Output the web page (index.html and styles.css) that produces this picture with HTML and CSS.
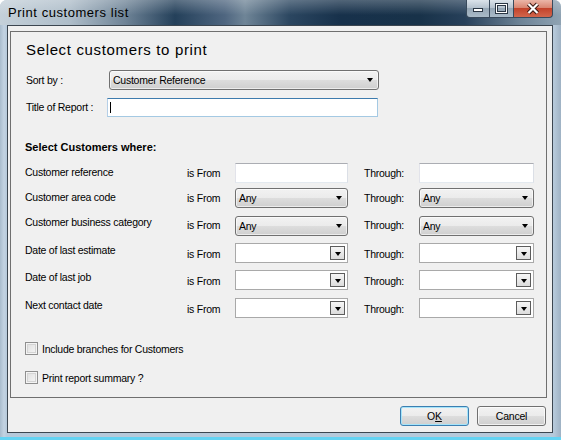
FILE: index.html
```html
<!DOCTYPE html>
<html lang="en">
<head>
  <meta charset="UTF-8">
  <title>Print customers list</title>
  <link rel="stylesheet" href="styles.css">
</head>
<body>
  <div class="window">
    <!-- Aero title bar -->
    <div class="titlebar">
      <span class="title">Print customers list</span>
      <div class="caption">
        <span class="cap cap-min">
          <svg width="22" height="17" viewBox="0 0 22 17"><rect x="6.5" y="8.5" width="9" height="3" fill="#fff" stroke="#2a3644"/></svg>
        </span>
        <span class="cap cap-max">
          <svg width="23" height="17" viewBox="0 0 23 17"><rect x="6.5" y="4.5" width="10" height="8" fill="none" stroke="#2a3644" stroke-width="3"/><rect x="6.5" y="4.5" width="10" height="8" fill="none" stroke="#fff"/></svg>
        </span>
        <span class="cap cap-close">
          <svg width="38" height="17" viewBox="0 0 38 17"><path d="M14.5 4l9 9M23.5 4l-9 9" stroke="#3a1a14" stroke-width="4.2"/><path d="M14.5 4l9 9M23.5 4l-9 9" stroke="#fff" stroke-width="2.2"/></svg>
        </span>
      </div>
    </div>

    <div class="client">
      <div class="group">
        <div class="heading">Select customers to print</div>

        <div class="field-row sort-row">
          <span class="lbl">Sort by :</span>
          <div class="combo sort-combo"><span class="combo-text">Customer Reference</span><span class="arrow"></span></div>
        </div>

        <div class="field-row title-row">
          <span class="lbl">Title of Report :</span>
          <div class="textbox focused title-box"><span class="caret"></span></div>
        </div>

        <div class="subheading">Select Customers where:</div>

        <div class="criteria">
          <div class="crit crit-a h25">
            <span class="lbl">Customer reference</span>
            <span class="sec">is From</span>
            <div class="textbox"></div>
            <span class="sec through">Through:</span>
            <div class="textbox"></div>
          </div>
          <div class="crit crit-a h28">
            <span class="lbl">Customer area code</span>
            <span class="sec">is From</span>
            <div class="combo"><span class="combo-text">Any</span><span class="arrow"></span></div>
            <span class="sec through">Through:</span>
            <div class="combo"><span class="combo-text">Any</span><span class="arrow"></span></div>
          </div>
          <div class="crit crit-b h27">
            <span class="lbl">Customer business category</span>
            <span class="sec">is From</span>
            <div class="combo"><span class="combo-text">Any</span><span class="arrow"></span></div>
            <span class="sec through">Through:</span>
            <div class="combo"><span class="combo-text">Any</span><span class="arrow"></span></div>
          </div>
          <div class="crit crit-c h27">
            <span class="lbl">Date of last estimate</span>
            <span class="sec">is From</span>
            <div class="datebox"><span class="drop"><span class="arrow"></span></span></div>
            <span class="sec through">Through:</span>
            <div class="datebox"><span class="drop"><span class="arrow"></span></span></div>
          </div>
          <div class="crit crit-c h28">
            <span class="lbl">Date of last job</span>
            <span class="sec">is From</span>
            <div class="datebox"><span class="drop"><span class="arrow"></span></span></div>
            <span class="sec through">Through:</span>
            <div class="datebox"><span class="drop"><span class="arrow"></span></span></div>
          </div>
          <div class="crit crit-c h20">
            <span class="lbl">Next contact date</span>
            <span class="sec">is From</span>
            <div class="datebox"><span class="drop"><span class="arrow"></span></span></div>
            <span class="sec through">Through:</span>
            <div class="datebox"><span class="drop"><span class="arrow"></span></span></div>
          </div>
        </div>

        <div class="check first"><span class="box"></span><span>Include branches for Customers</span></div>
        <div class="check second"><span class="box"></span><span>Print report summary ?</span></div>
      </div>

      <div class="buttons">
        <button class="btn default">O<u>K</u></button>
        <button class="btn">Cancel</button>
      </div>
    </div>
  </div>
</body>
</html>
```

FILE: styles.css
```css
body { margin: 0; background: #fff; font-family: "Liberation Sans", Arial, sans-serif; }

.window {
  width: 561px; height: 440px; box-sizing: border-box;
  padding: 0 8px 7px 7px;
  border-radius: 7px 7px 0 0;
  background: linear-gradient(90deg, #a9bccd 0px, #c3d3e2 4px, #b6c9da 7px, #b6c9da 554px, #9fb2c4 561px);
  box-shadow: inset 0 -3px 0 #63d3f3;
  display: flex; flex-direction: column;
}

.titlebar {
  height: 25px; display: flex; justify-content: space-between; align-items: flex-start;
  margin: 0 -8px 0 -7px; padding: 0 8px 0 7px;
  border-radius: 7px 7px 0 0;
  background:
    linear-gradient(180deg, rgba(255,255,255,0.25), rgba(255,255,255,0) 60%),
    linear-gradient(90deg, #c4d0d9 0px, #aebdc9 70px, #6f8497 125px, #24405a 175px, #4f6680 225px, #6f8597 245px, #2b4660 290px, #17314b 340px, #183249 420px, #27405a 465px, #6d8396 520px, #8fa3b3 561px);
}
.title { font-size: 13px; letter-spacing: 0.55px; color: #000; line-height: 25px; padding-left: 1px; }

.caption { display: flex; }
.cap { display: block; height: 17px; border: 1px solid #394a5c; border-top: none; }
.cap svg { display: block; }
.cap-min {
  border-radius: 0 0 0 4px;
  background: linear-gradient(#dbe3ea, #b6c3cf 45%, #96a7b6 50%, #a9bac8);
}
.cap-max {
  border-left: none;
  background: linear-gradient(#dbe3ea, #b6c3cf 45%, #96a7b6 50%, #a9bac8);
}
.cap-close {
  border-left: none; border-radius: 0 0 4px 0;
  background: linear-gradient(#ebb6a8, #d98672 45%, #c3432b 50%, #d2664c);
}

.client {
  flex: 1; background: #f0f0f0; border: 1px solid #3c4650;
  display: flex; flex-direction: column;
}

.group {
  margin: 5px 5px 0 2px; height: 367px; box-sizing: border-box;
  border: 1px solid #6f6f6f; padding: 0 0 0 14px;
  font-size: 10.5px; letter-spacing: -0.25px; color: #000;
}

.heading { margin: 8px 0 0 1px; font-size: 15px; letter-spacing: 0.65px; line-height: 19px; }

.field-row { display: flex; align-items: center; margin-left: 1px; }
.sort-row { margin-top: 11px; height: 20px; }
.title-row { margin-top: 8px; height: 19px; }
.sort-row .lbl { width: 83px; }
.title-row .lbl { width: 81px; }

.lbl { line-height: 13px; white-space: nowrap; }

.combo {
  height: 20px; box-sizing: border-box; border: 1px solid #707070; border-radius: 3px;
  background: linear-gradient(#f2f2f2, #ebebeb 50%, #dddddd 50%, #cfcfcf);
  display: flex; align-items: center; justify-content: space-between; padding: 0 4px 0 3px;
  box-shadow: inset 0 0 0 1px rgba(255,255,255,0.6);
}
.sort-combo { width: 270px; }
.combo-text { line-height: 13px; }

.arrow { width: 0; height: 0; border-left: 3.5px solid transparent; border-right: 3.5px solid transparent; border-top: 4px solid #000; margin-right: 1px; }

.textbox {
  height: 20px; box-sizing: border-box; background: #fff;
  border: 1px solid #e3e9ef; border-top-color: #abadb3; border-left-color: #e2e3ea; border-right-color: #dbdfe6;
}
.textbox.focused { border-color: #a4c9e3; border-top-color: #3d7bad; border-left-color: #b5cfe7; }
.title-box { width: 271px; height: 19px; padding: 3px 0 0 2px; }
.caret { display: block; width: 1px; height: 11px; background: #000; }

.subheading { margin-top: 23px; font-weight: bold; font-size: 11px; letter-spacing: 0; line-height: 14px; }

.criteria { margin-top: 9px; }
.crit { display: grid; grid-template-columns: 162px 48px 113px 16px 55px 115px; align-items: start; }
.crit .through { grid-column: 5; }
.h25 { height: 25px; }
.h28 { height: 28px; }
.h27 { height: 27px; }
.h20 { height: 20px; }
.sec { line-height: 13px; }
.crit-a .lbl { padding-top: 3px; }
.crit-a .sec { padding-top: 3.5px; }
.crit-b .lbl { padding-top: 0; }
.crit-b .sec { padding-top: 3px; }
.crit-c .lbl { padding-top: 1px; }
.crit-c .sec { padding-top: 4.5px; }

.datebox {
  height: 20px; box-sizing: border-box; background: #fff; border: 1px solid #a9a9a9;
  display: flex; justify-content: flex-end; align-items: center; padding-right: 2px;
}
.drop {
  width: 15px; height: 14px; box-sizing: border-box; border: 1px solid #5c5c5c;
  background: linear-gradient(#f6f6f6, #dcdcdc);
  display: flex; align-items: center; justify-content: center;
}
.drop .arrow { margin: 1px 0 0; }

.check { display: flex; align-items: center; height: 13px; }
.check.first { margin-top: 24px; }
.check.second { margin-top: 16px; }
.box {
  width: 13px; height: 13px; box-sizing: border-box; border: 1px solid #8f8f8f; margin-right: 4px;
  background: linear-gradient(135deg, #dcdcdc, #f8f8f8);
  box-shadow: inset 0 0 0 1px #f4f4f4, inset 0 0 0 2px #d4d4d4;
}

.buttons { display: flex; justify-content: flex-end; gap: 8px; margin: 8px 6px 0 0; }
.btn {
  width: 69px; height: 20px; box-sizing: border-box; padding: 0;
  font-family: "Liberation Sans", Arial, sans-serif; font-size: 10.5px; letter-spacing: -0.2px; color: #000;
  border: 1px solid #707070; border-radius: 3px;
  background: linear-gradient(#f2f2f2, #ebebeb 50%, #dddddd 50%, #cfcfcf);
  box-shadow: inset 0 0 0 1px rgba(255,255,255,0.7);
}
.btn.default { border-color: #3c7fb1; box-shadow: inset 0 0 0 1px #a5e4fa; }
```
